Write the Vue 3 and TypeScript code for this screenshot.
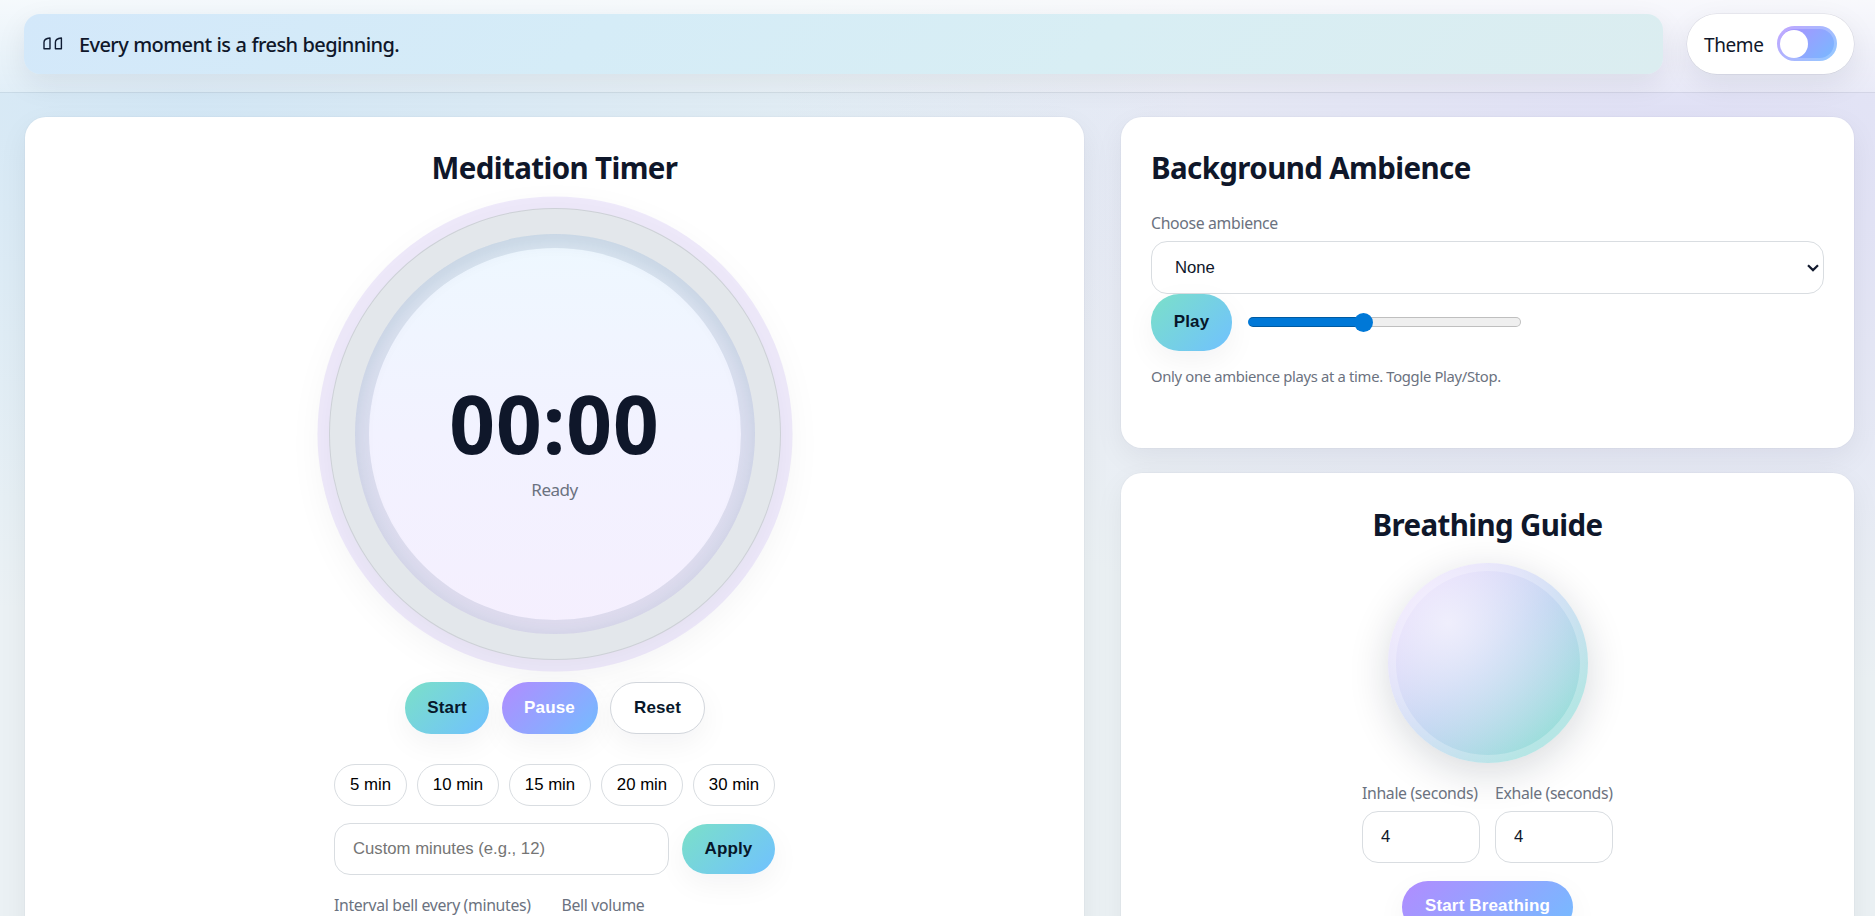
<script setup lang="ts">
import { ref } from 'vue'

const presets: number[] = [5, 10, 15, 20, 30]
const customMinutes = ref<string>('')
const inhale = ref<string>('4')
const exhale = ref<string>('4')
const volume = ref<number>(0.415)
</script>

<template>
  <div class="page">
    <header class="topbar">
      <div class="quote">
        <svg class="quote-icon" width="20" height="13" viewBox="0 0 20 13" fill="none" stroke="#0f1c33" stroke-width="1.4" stroke-linejoin="round">
          <path d="M1 11.8V5.2C1 2.6 2.7 1.4 7 1V11.8Z" />
          <path d="M12.4 11.8V5.2C12.4 2.6 14.1 1.4 18.4 1V11.8Z" />
        </svg>
        <span class="quote-text">Every moment is a fresh beginning.</span>
      </div>
      <div class="theme">
        <span class="theme-label">Theme</span>
        <button class="switch" aria-label="Theme"><span class="knob"></span></button>
      </div>
    </header>

    <main class="layout">
      <section class="card timer-card">
        <h2>Meditation Timer</h2>
        <div class="dial">
          <div class="face">
            <div class="time">00:00</div>
            <div class="status">Ready</div>
          </div>
        </div>
        <div class="controls">
          <button class="btn mint start">Start</button>
          <button class="btn violet pause">Pause</button>
          <button class="btn plain reset">Reset</button>
        </div>
        <div class="setup">
          <div class="chips">
            <button v-for="m in presets" :key="m" class="chip">{{ m }} min</button>
          </div>
          <div class="custom">
            <input v-model="customMinutes" class="field" type="text" placeholder="Custom minutes (e.g., 12)" />
            <button class="btn mint apply">Apply</button>
          </div>
          <div class="bells">
            <label>Interval bell every (minutes)</label>
            <label>Bell volume</label>
          </div>
        </div>
      </section>

      <div class="side">
        <section class="card ambience">
          <h2>Background Ambience</h2>
          <label>Choose ambience</label>
          <div class="select">
            <span>None</span>
            <svg width="12" height="8" viewBox="0 0 12 8" fill="none" stroke="#121a2e" stroke-width="2.2">
              <path d="M1 1.2L6 6.1L11 1.2" />
            </svg>
          </div>
          <div class="player">
            <button class="btn mint play">Play</button>
            <input v-model.number="volume" class="slider" type="range" min="0" max="1" step="0.005" />
          </div>
          <p class="note">Only one ambience plays at a time. Toggle Play/Stop.</p>
        </section>

        <section class="card breathing">
          <h2>Breathing Guide</h2>
          <div class="orb"></div>
          <div class="durations">
            <div class="duration">
              <label>Inhale (seconds)</label>
              <input v-model="inhale" class="field" type="text" />
            </div>
            <div class="duration">
              <label>Exhale (seconds)</label>
              <input v-model="exhale" class="field" type="text" />
            </div>
          </div>
          <button class="btn violet breathe">Start Breathing</button>
        </section>
      </div>
    </main>
  </div>
</template>

<style>
body {
  overflow: hidden;
}
</style>

<style scoped>
* {
  box-sizing: border-box;
}

.page {
  height: 916px;
  overflow: hidden;
  color: #0f172a;
  font-family: "Noto Sans", "Open Sans", sans-serif;
  background:
    radial-gradient(1150px 600px at 10% 10%, rgba(116, 192, 252, 0.2), transparent 88%),
    radial-gradient(1050px 600px at 90% 18%, rgba(177, 151, 252, 0.2), transparent 88%),
    #ebf1f4;
}

.topbar {
  height: 93px;
  display: flex;
  align-items: flex-start;
  gap: 24px;
  padding: 14px 21px 0 24px;
  border-bottom: 1px solid rgba(15, 23, 42, 0.07);
  background: linear-gradient(180deg, rgba(255, 255, 255, 0.75), rgba(255, 255, 255, 0.25)) padding-box;
}

.quote {
  flex: 1;
  height: 60px;
  display: flex;
  align-items: center;
  padding-left: 19px;
  border-radius: 16px;
  background: linear-gradient(135deg, #d3e8fa, #d5ecf7 35%, #d8eef4 65%, #dbedf0);
  box-shadow: 0 10px 30px rgba(15, 23, 42, 0.08);
}

.quote-icon {
  flex: none;
  margin-top: -1px;
}

.quote-text {
  margin-left: 16px;
  font-size: 20px;
  font-weight: 500;
  letter-spacing: -0.6px;
  word-spacing: 0.5px;
}

.theme {
  width: 167px;
  height: 60px;
  display: flex;
  align-items: center;
  justify-content: space-between;
  padding: 0 17px;
  border-radius: 30px;
  background: #fff;
  box-shadow: 0 10px 30px rgba(15, 23, 42, 0.08), 0 0 0 0.5px rgba(15, 23, 42, 0.1);
}

.theme-label {
  margin-top: 1px;
  font-size: 19px;
  letter-spacing: -0.4px;
}

.switch {
  width: 60px;
  height: 35px;
  margin-top: -1px;
  padding: 0;
  display: flex;
  align-items: center;
  border: 3px solid rgba(255, 255, 255, 0.22);
  border-radius: 18px;
  background: linear-gradient(135deg, #b18cff, #74bcff) border-box;
}

.knob {
  width: 28px;
  height: 28px;
  border-radius: 50%;
  background: #fff;
}

.layout {
  display: grid;
  grid-template-columns: 1059px 733px;
  justify-content: space-between;
  padding: 24px 21px 0 25px;
}

.card {
  border-radius: 21px;
  background: #fff;
  box-shadow: 0 10px 30px rgba(15, 23, 42, 0.06), 0 0 0 1px rgba(15, 23, 42, 0.02);
}

h2 {
  margin: 0;
  font-size: 29.5px;
  line-height: 40px;
  font-weight: 700;
  letter-spacing: -0.62px;
}

.timer-card {
  height: 920px;
  padding-top: 31px;
  display: flex;
  flex-direction: column;
  align-items: center;
}

.dial {
  width: 452px;
  height: 452px;
  margin-top: 20px;
  display: grid;
  place-items: center;
  border: 1px solid rgba(15, 23, 42, 0.1);
  border-radius: 50%;
  background: #e3e7eb;
  box-shadow: 0 0 0 11.5px rgba(170, 145, 240, 0.18), 0 10px 44px rgba(15, 23, 42, 0.07);
}

.face {
  width: 400px;
  height: 400px;
  display: flex;
  flex-direction: column;
  align-items: center;
  border-radius: 50%;
  background: linear-gradient(180deg, #eef8ff, #f2f2ff 50%, #f5effe);
  box-shadow: inset 0 0 0 14px rgba(15, 50, 100, 0.1), inset 0 4px 20px rgba(15, 60, 110, 0.11);
}

.time {
  margin-top: 134px;
  line-height: 110px;
  font-size: 80px;
  font-weight: 700;
  letter-spacing: 1px;
}

.status {
  margin-top: -1px;
  color: #6b7280;
  font-size: 17px;
  line-height: 26px;
  letter-spacing: -0.5px;
}

.controls {
  margin-top: 22px;
  padding-left: 1px;
  display: flex;
  gap: 12.5px;
}

.btn {
  height: 52px;
  padding: 0;
  border: 0;
  border-radius: 26px;
  color: #07172a;
  font: 700 17px "Liberation Sans", Arial, sans-serif;
  letter-spacing: 0.15px;
  box-shadow: 0 10px 30px rgba(15, 23, 42, 0.05);
}

.mint {
  background: linear-gradient(135deg, #7be0c8, #70c1ff);
}

.violet {
  color: #fff;
  background: linear-gradient(135deg, #b18cff, #74bcff);
}

.plain {
  border: 1px solid #d2d6dc;
  background: #fff;
}

.start {
  width: 84px;
}

.pause {
  width: 96px;
}

.reset {
  width: 95px;
}

.setup {
  width: 441px;
  margin-top: 30px;
}

.chips {
  display: flex;
  justify-content: space-between;
}

.chip {
  width: 82px;
  height: 42px;
  padding: 0;
  border: 1px solid #d9dde1;
  border-radius: 21px;
  background: #fff;
  color: #000;
  font: 16.8px "Liberation Sans", Arial, sans-serif;
}

.chip:first-child {
  width: 73px;
}

.custom {
  margin-top: 17px;
  display: flex;
  align-items: center;
  justify-content: space-between;
}

.field {
  width: 335px;
  height: 52px;
  padding: 0 18px;
  border: 1px solid #d9dde1;
  border-radius: 16px;
  outline: 0;
  background: #fff;
  color: #0f172a;
  font: 16.7px "Liberation Sans", Arial, sans-serif;
}

.field::placeholder {
  color: #757575;
}

.apply {
  width: 93px;
  height: 50px;
}

label {
  color: #6b7280;
  font-size: 15.8px;
  line-height: 24px;
  letter-spacing: -0.34px;
}

.bells {
  margin-top: 18px;
  display: flex;
  gap: 31px;
}

.side {
  display: flex;
  flex-direction: column;
  gap: 25px;
}

.ambience {
  height: 331px;
  padding: 31px 30px 0;
}

.ambience label {
  display: block;
  margin-top: 23px;
}

.select {
  height: 53px;
  margin-top: 6px;
  padding: 0 4px 0 23px;
  display: flex;
  align-items: center;
  justify-content: space-between;
  border: 1px solid #d9dde1;
  border-radius: 16px;
  font: 16.7px "Liberation Sans", Arial, sans-serif;
}

.player {
  display: flex;
  align-items: center;
  gap: 16px;
}

.play {
  width: 81px;
  height: 57px;
  padding-bottom: 2px;
  border-radius: 28px;
}

.slider {
  width: 273px;
  height: 19px;
  margin: 0 0 1px;
  appearance: none;
  background: transparent;
}

.slider::-webkit-slider-runnable-track {
  height: 10px;
  box-sizing: border-box;
  border: 1px solid rgba(0, 0, 0, 0.25);
  border-left-color: #0078d7;
  border-radius: 5px;
  background: linear-gradient(90deg, #0078d7 42%, transparent 42%) border-box, linear-gradient(#efefef, #efefef) padding-box;
}

.slider::-webkit-slider-thumb {
  appearance: none;
  width: 19px;
  height: 19px;
  margin-top: -5.5px;
  border-radius: 50%;
  background: #0078d7;
}

.note {
  margin: 13px 0 0;
  color: #6b7280;
  font-size: 14.8px;
  line-height: 24px;
  letter-spacing: -0.32px;
}

.breathing {
  height: 520px;
  padding-top: 32px;
  display: flex;
  flex-direction: column;
  align-items: center;
}

.orb {
  width: 200px;
  height: 200px;
  margin-top: 18px;
  border-radius: 50%;
  background:
    radial-gradient(circle at 30% 30%, rgba(243, 242, 253, 0.9), rgba(225, 235, 246, 0.1) 75%),
    linear-gradient(135deg, #decbfb 15%, #b3cdee 50%, #96dcd9 82%);
  box-shadow: inset 0 0 0 8px rgba(255, 255, 255, 0.25), 0 10px 40px rgba(15, 23, 42, 0.16);
}

.durations {
  margin-top: 18px;
  display: flex;
  gap: 15px;
}

.duration {
  width: 118px;
  display: flex;
  flex-direction: column;
}

.duration label {
  white-space: nowrap;
}

.duration .field {
  width: 118px;
  margin-top: 6px;
}

.breathe {
  width: 171px;
  flex: none;
  margin-top: 18px;
  padding-bottom: 2px;
}
</style>
